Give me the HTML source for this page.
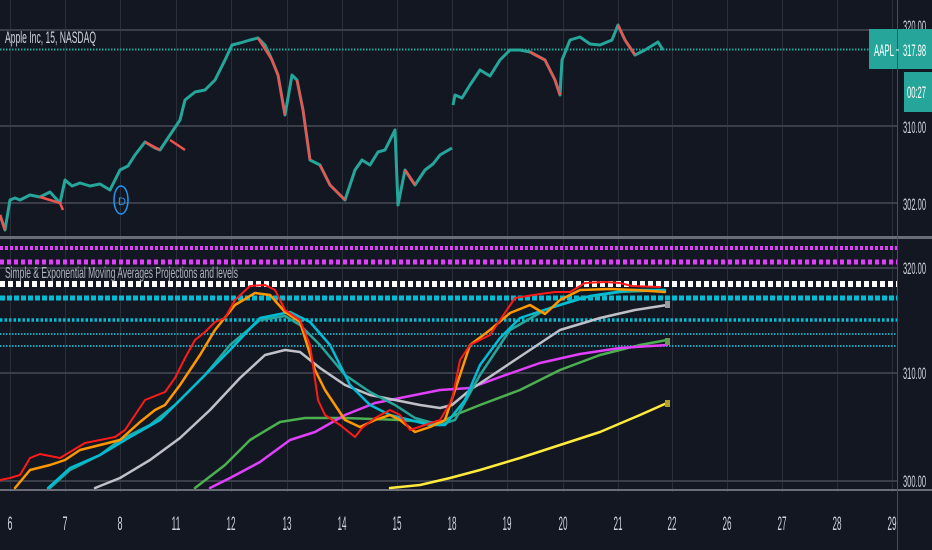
<!DOCTYPE html>
<html><head><meta charset="utf-8"><style>
html,body{margin:0;padding:0;background:#131722;}
svg{display:block}
text{font-family:"Liberation Sans",sans-serif;fill:#d1d4dc}
</style></head><body>
<svg width="932" height="550" viewBox="0 0 932 550" xmlns="http://www.w3.org/2000/svg">
<rect width="932" height="550" fill="#131722"/>
<g stroke="#2a2e39" stroke-width="1">
<line x1="10.5" y1="0" x2="10.5" y2="492"/><line x1="65.5" y1="0" x2="65.5" y2="492"/><line x1="120.5" y1="0" x2="120.5" y2="492"/><line x1="176.5" y1="0" x2="176.5" y2="492"/><line x1="231.5" y1="0" x2="231.5" y2="492"/><line x1="287.5" y1="0" x2="287.5" y2="492"/><line x1="342.5" y1="0" x2="342.5" y2="492"/><line x1="397.5" y1="0" x2="397.5" y2="492"/><line x1="452.5" y1="0" x2="452.5" y2="492"/><line x1="507.5" y1="0" x2="507.5" y2="492"/><line x1="563.5" y1="0" x2="563.5" y2="492"/><line x1="618.5" y1="0" x2="618.5" y2="492"/><line x1="672.5" y1="0" x2="672.5" y2="492"/><line x1="727.5" y1="0" x2="727.5" y2="492"/><line x1="782.5" y1="0" x2="782.5" y2="492"/><line x1="837.5" y1="0" x2="837.5" y2="492"/><line x1="892.5" y1="0" x2="892.5" y2="492"/>
</g>
<g stroke="#3a3e49" stroke-width="2">
<line x1="0" y1="30" x2="897" y2="30"/><line x1="0" y1="126" x2="897" y2="126"/><line x1="0" y1="203" x2="897" y2="203"/>
<line x1="0" y1="268" x2="897" y2="268"/><line x1="0" y1="373" x2="897" y2="373"/><line x1="0" y1="481" x2="897" y2="481"/>
</g>
<line x1="0" y1="237.5" x2="932" y2="237.5" stroke="#6a6d78" stroke-width="3"/>
<line x1="0" y1="490" x2="932" y2="490" stroke="#6a6d78" stroke-width="2"/>
<line x1="897.5" y1="0" x2="897.5" y2="550" stroke="#4a4e59" stroke-width="1"/>
<line x1="0" y1="49.5" x2="897" y2="49.5" stroke="#26a69a" stroke-width="2" stroke-dasharray="1.5 1.5"/>
<!-- price -->
<polyline fill="none" stroke="#26a69a" stroke-width="3" stroke-linejoin="round" points="0,215 5,230 10,200 15,198 20,200 30,195 40,197 50,192 60,203 65,180 72,186 80,183 90,186 100,184 110,190 120,170 128,166 135,155 145,142 155,148 160,150 170,135 180,120 185,100 195,92 205,90 215,80 225,60 232,45 240,43 250,40 258,38 265,45 272,60 278,75 285,115 292,75 297,80 303,110 310,160 320,165 330,185 345,200 355,170 362,160 370,165 378,152 385,150 395,130 398,205 405,170 415,185 425,170 433,164 440,155 452,148"/>
<polyline fill="none" stroke="#26a69a" stroke-width="3" stroke-linejoin="round" points="453,105 455,95 462,98 470,85 480,70 490,76 500,60 510,50 520,50 530,52 545,60 555,80 560,95 562,60 570,40 580,37 590,44 600,45 612,40 618,25 625,40 635,55 645,50 658,42 663,50"/>
<g fill="none" stroke="#ef5350" stroke-width="2.5">
<polyline points="0,215 5,230"/><polyline points="40,197 60,203 63,210"/><polyline points="145,142 160,150"/><polyline points="258,38 272,60 278,75 285,115"/><polyline points="297,80 303,110 310,160"/><polyline points="320,165 330,185 345,200"/><polyline points="405,170 415,185"/><polyline points="530,52 545,60 555,80 560,95"/><polyline points="618,25 625,40 635,55"/><polyline points="170,140 185,150"/>
</g>
<ellipse cx="121" cy="200" rx="7" ry="14" fill="none" stroke="#2196f3" stroke-width="1.5"/>
<text x="118" y="205" font-size="11" style="fill:#2196f3">D</text>
<text x="5" y="43" font-size="17" textLength="91" lengthAdjust="spacingAndGlyphs">Apple Inc, 15, NASDAQ</text>
<!-- dotted levels -->
<line x1="0" y1="248" x2="897" y2="248" stroke="#e040fb" stroke-width="4" stroke-dasharray="3 2"/>
<line x1="0" y1="262" x2="897" y2="262" stroke="#e040fb" stroke-width="5" stroke-dasharray="4 3"/>
<line x1="0" y1="284" x2="897" y2="284" stroke="#ffffff" stroke-width="6" stroke-dasharray="5 3"/>
<line x1="0" y1="298" x2="897" y2="298" stroke="#00bcd4" stroke-width="5" stroke-dasharray="5 2"/>
<line x1="0" y1="320" x2="897" y2="320" stroke="#00bcd4" stroke-width="3.5" stroke-dasharray="2.5 2"/>
<line x1="0" y1="334" x2="897" y2="334" stroke="#1ba3bb" stroke-width="2" stroke-dasharray="1.5 1.5"/>
<line x1="0" y1="346" x2="897" y2="346" stroke="#1ba3bb" stroke-width="2" stroke-dasharray="1.5 1.5"/>
<text x="5" y="278" font-size="16" textLength="233" lengthAdjust="spacingAndGlyphs" style="fill:#b2b5be">Simple &amp; Exponential Moving Averages Projections and levels</text>
<!-- MAs -->
<g fill="none" stroke-linejoin="round" stroke-linecap="round">
<polyline stroke="#ffeb3b" stroke-width="2.5" points="390,488 420,485 450,478 480,470 520,458 560,445 600,432 640,415 667,403"/>
<polyline stroke="#4caf50" stroke-width="2.5" points="195,488 225,465 250,440 280,422 305,418 345,418 400,420 440,423 455,415 480,405 520,390 560,370 600,355 640,345 667,340"/>
<polyline stroke="#e040fb" stroke-width="2.5" points="210,488 230,478 260,462 290,440 315,432 345,415 375,403 400,398 440,390 470,388 500,377 540,363 580,354 620,348 667,345"/>
<polyline stroke="#c0c0c8" stroke-width="2.5" points="95,488 120,478 150,460 180,438 210,410 240,378 265,355 285,350 300,352 320,368 345,385 370,395 395,400 420,405 440,408 452,405 470,390 500,370 530,350 560,330 600,318 635,310 667,305"/>
<polyline stroke="#26a69a" stroke-width="2.5" points="50,488 70,470 100,455 120,440 150,425 175,405 205,375 230,345 260,320 285,316 300,325 320,345 345,375 370,392 395,405 415,418 440,425 455,420 480,375 510,330 545,310 580,298 620,292 665,290"/>
<polyline stroke="#00bcd4" stroke-width="2.5" points="48,488 70,468 100,455 125,440 160,420 195,385 230,350 260,318 290,312 310,322 330,345 350,385 370,405 390,415 410,420 430,425 445,425 465,400 480,365 500,338 520,318 550,308 590,296 630,290 665,290"/>
<polyline stroke="#ff9800" stroke-width="2.5" points="15,488 30,470 50,465 65,460 80,450 100,445 120,440 140,422 155,410 165,405 180,385 200,355 215,330 235,305 255,293 270,295 285,312 300,322 315,370 325,390 345,420 360,427 375,420 390,415 400,420 415,432 430,427 445,420 455,390 470,345 490,330 510,313 530,305 545,314 560,300 580,290 610,289 635,290 665,292"/>
<polyline stroke="#ff1a1a" stroke-width="2" points="0,480 10,478 20,475 30,458 40,454 60,458 70,452 85,443 100,440 115,437 125,430 135,415 145,400 155,396 165,392 175,378 185,358 195,340 205,332 215,322 225,318 235,300 250,286 265,285 275,290 285,310 300,320 310,345 318,400 325,415 340,425 355,437 362,428 375,418 390,410 400,415 410,430 425,425 440,420 452,400 460,360 470,345 490,335 500,320 515,298 540,294 555,292 570,292 585,283 605,282 620,283 632,286 660,287"/>
</g>
<rect x="665" y="301" width="5" height="7" fill="#9a9aa0"/><rect x="665" y="338" width="5" height="7" fill="#6a9a5a"/><rect x="665" y="400" width="5" height="7" fill="#b0a030"/>
<!-- right axis -->
<g font-size="17">
<text x="903" y="32" textLength="23" lengthAdjust="spacingAndGlyphs">320.00</text><text x="903" y="133" textLength="23" lengthAdjust="spacingAndGlyphs">310.00</text><text x="903" y="210" textLength="23" lengthAdjust="spacingAndGlyphs">302.00</text>
<text x="903" y="274" textLength="23" lengthAdjust="spacingAndGlyphs">320.00</text><text x="903" y="379" textLength="23" lengthAdjust="spacingAndGlyphs">310.00</text><text x="903" y="487" textLength="23" lengthAdjust="spacingAndGlyphs">300.00</text>
</g>
<rect x="869" y="29" width="28" height="40" fill="#26a69a"/>
<rect x="898" y="29" width="34" height="40" fill="#26a69a"/>
<rect x="904" y="72" width="28" height="40" fill="#26a69a"/>
<line x1="896" y1="50" x2="899" y2="50" stroke="#fff" stroke-width="1"/>
<g font-size="17">
<text x="874" y="56" textLength="20" lengthAdjust="spacingAndGlyphs" style="fill:#fff">AAPL</text><text x="903" y="56" textLength="23" lengthAdjust="spacingAndGlyphs" style="fill:#fff">317.98</text><text x="907" y="98" textLength="19" lengthAdjust="spacingAndGlyphs" style="fill:#fff">00:27</text>
</g>
<!-- dates -->
<g font-size="19" text-anchor="middle">
<text x="10" y="530" textLength="5" lengthAdjust="spacingAndGlyphs">6</text><text x="65" y="530" textLength="5" lengthAdjust="spacingAndGlyphs">7</text><text x="120" y="530" textLength="5" lengthAdjust="spacingAndGlyphs">8</text><text x="176" y="530" textLength="9" lengthAdjust="spacingAndGlyphs">11</text><text x="231" y="530" textLength="9" lengthAdjust="spacingAndGlyphs">12</text><text x="287" y="530" textLength="9" lengthAdjust="spacingAndGlyphs">13</text><text x="342" y="530" textLength="9" lengthAdjust="spacingAndGlyphs">14</text><text x="397" y="530" textLength="9" lengthAdjust="spacingAndGlyphs">15</text><text x="452" y="530" textLength="9" lengthAdjust="spacingAndGlyphs">18</text><text x="507" y="530" textLength="9" lengthAdjust="spacingAndGlyphs">19</text><text x="563" y="530" textLength="9" lengthAdjust="spacingAndGlyphs">20</text><text x="618" y="530" textLength="9" lengthAdjust="spacingAndGlyphs">21</text><text x="672" y="530" textLength="9" lengthAdjust="spacingAndGlyphs">22</text><text x="727" y="530" textLength="9" lengthAdjust="spacingAndGlyphs">26</text><text x="782" y="530" textLength="9" lengthAdjust="spacingAndGlyphs">27</text><text x="837" y="530" textLength="9" lengthAdjust="spacingAndGlyphs">28</text><text x="892" y="530" textLength="9" lengthAdjust="spacingAndGlyphs">29</text>
</g>
</svg>
</body></html>
